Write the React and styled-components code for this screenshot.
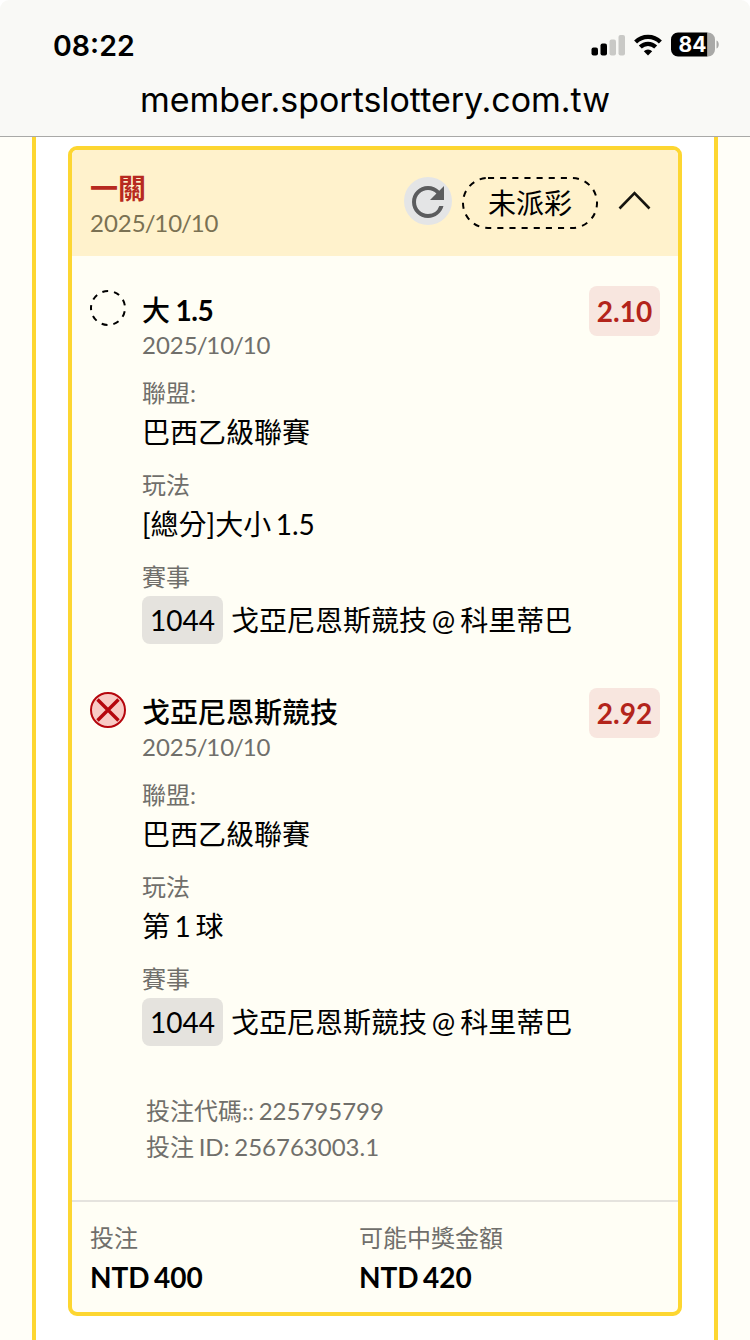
import React from 'react';
import styled, { createGlobalStyle } from 'styled-components';

const GlobalStyle = createGlobalStyle`
  * {
    box-sizing: border-box;
  }
  body {
    margin: 0;
    background: #ffffff;
    color: #000000;
    font-family: Lato, "Noto Sans CJK TC", sans-serif;
  }
`;

const Screen = styled.div`
  width: 750px;
  height: 1340px;
  overflow: hidden;
  display: flex;
  flex-direction: column;
`;

const BrowserBar = styled.header`
  height: 137px;
  flex: none;
  background: #f9f9f6;
  border-bottom: 1px solid #a9a9a7;
  border-radius: 9px 9px 0 0;
  font-family: Inter, sans-serif;
`;

const StatusBar = styled.div`
  display: flex;
  align-items: center;
  justify-content: space-between;
  height: 72px;
  padding: 18px 30px 0 53px;
`;

const Clock = styled.span`
  padding-top: 1px;
  font-size: 28.5px;
  font-weight: 600;
  line-height: 36px;
`;

const StatusIcons = styled.div`
  display: flex;
  align-items: center;
  gap: 9px;
  padding-bottom: 1px;
`;

const Address = styled.div`
  height: 56px;
  line-height: 56px;
  font-size: 34px;
  letter-spacing: -0.03px;
  text-align: center;
`;

const Page = styled.main`
  flex: 1;
  display: flex;
  padding: 0 32px;
  background: #fffef8;
`;

const Panel = styled.div`
  flex: 1;
  padding: 9px 32px 0;
  background: #ffffff;
  border: solid #fdd631;
  border-width: 0 4px;
`;

const Card = styled.section`
  height: 1170px;
  border: 4px solid #fdd631;
  border-radius: 9px;
  background: #fffef5;
  overflow: hidden;
`;

const CardHeader = styled.div`
  display: flex;
  justify-content: space-between;
  height: 106px;
  padding: 20px 26px 0 18px;
  background: #fff2cc;
`;

const CardTitle = styled.div`
  font-size: 28px;
  font-weight: 700;
  line-height: 36px;
  color: #b72a20;
`;

const DateText = styled.div`
  font-size: 24px;
  line-height: 34px;
  color: ${({ $warm }) => ($warm ? '#7a7153' : '#706f6b')};
`;

const Slash = styled.span`
  margin: 0 -1.3px 0 -1px;
`;

const HeaderActions = styled.div`
  display: flex;
  align-items: flex-start;
  padding-top: 7px;
`;

const RefreshButton = styled.div`
  width: 48px;
  height: 48px;
  border-radius: 50%;
  background: #e4e5e6;
  margin-right: 10px;

  svg {
    display: block;
  }
`;

const StatusPill = styled.div`
  position: relative;
  width: 136px;
  height: 52px;
  margin-right: 20px;
  font-size: 28px;
  line-height: 52px;
  text-align: center;

  svg {
    position: absolute;
    left: 0;
    top: 0;
  }
`;

const Chevron = styled.svg`
  display: block;
  margin-top: 12px;
`;

const Bet = styled.article`
  display: grid;
  grid-template-columns: 52px 1fr auto;
  align-items: start;
  padding: ${({ $first }) => ($first ? '36px' : '50px')} 18px 0;
`;

const BetIcon = styled.svg`
  display: block;
  margin-top: -2px;
`;

const BetName = styled.div`
  font-size: 28px;
  font-weight: 500;
  line-height: 36px;
  word-spacing: -1.5px;

  b {
    font-weight: 700;
    letter-spacing: -0.5px;
  }
`;

const Odds = styled.div`
  width: 71px;
  height: 50px;
  margin-top: -6px;
  border-radius: 8px;
  background: #f8e6df;
  color: #b3241b;
  font-size: 28px;
  font-weight: 700;
  line-height: 51px;
  text-align: center;
`;

const Field = styled.div`
  margin-top: ${({ $first }) => ($first ? '13px' : '14px')};
`;

const Label = styled.div`
  font-size: 24px;
  line-height: 36px;
  color: #706f6b;
`;

const Value = styled.div`
  font-size: 28px;
  line-height: 42px;
  word-spacing: -2.6px;
`;

const Match = styled.div`
  display: flex;
  align-items: center;
  gap: 8px;
  height: 48px;
  margin-top: 1px;
  font-size: 28px;
  line-height: 48px;
  white-space: nowrap;
  word-spacing: -2.3px;
`;

const MatchNo = styled.span`
  width: 81px;
  border-radius: 8px;
  background: #e5e3de;
  text-align: center;
`;

const Codes = styled.div`
  height: 154px;
  padding: 47px 0 0 74px;
  font-size: 24px;
  line-height: 36px;
  word-spacing: -1.5px;
  color: #706f6b;
`;

const Totals = styled.footer`
  display: grid;
  grid-template-columns: 269px 1fr;
  padding: 18px 18px 0;
  border-top: 2px solid #e5e3de;
`;

const Amount = styled.div`
  font-size: 28px;
  font-weight: 700;
  line-height: 43px;
  word-spacing: -2.4px;
`;

const bets = [
  { name: <>大 <b>1.5</b></>, odds: '2.10', type: '[總分]大小 1.5', lost: false },
  { name: '戈亞尼恩斯競技', odds: '2.92', type: '第 1 球', lost: true },
];

const SignalIcon = () => (
  <svg width="34" height="22" viewBox="0 0 34 22">
    <rect x="0.500" y="13.500" width="6.500" height="8" rx="2" fill="#000" />
    <rect x="9.500" y="9.500" width="6.500" height="12" rx="2" fill="#000" />
    <rect x="18.500" y="5.500" width="6.500" height="16" rx="2" fill="#c9c9c6" />
    <rect x="27.500" y="1" width="6.500" height="20.500" rx="2" fill="#c9c9c6" />
  </svg>
);

const WifiIcon = () => (
  <svg width="28" height="22" viewBox="0 0 28 22">
    <g fill="none" stroke="#000" strokeWidth="4.200">
      <path d="M1.600 8a17.600 17.600 0 0 1 24.800 0" />
      <path d="M6.300 13a10.900 10.900 0 0 1 15.400 0" />
    </g>
    <path d="M14 21.500l-4.200-4.200a6 6 0 0 1 8.400 0z" />
  </svg>
);

const BatteryIcon = () => (
  <svg width="49" height="25" viewBox="0 0 49 25">
    <path d="M7 .5h29.500v24H7a7 7 0 0 1-7-7v-10a7 7 0 0 1 7-7z" />
    <path d="M36.500.5h.5a7 7 0 0 1 7 7v10a7 7 0 0 1-7 7h-.5z" fill="#a9a9a7" />
    <path d="M45.500 8.500c3 1 3 7 0 8z" fill="#a9a9a7" />
    <text x="21.500" y="20" fill="#fff" fontFamily="Inter, sans-serif" fontSize="21" fontWeight="700" textAnchor="middle">
      84
    </text>
  </svg>
);

const PendingIcon = () => (
  <BetIcon width="36" height="36" viewBox="0 0 36 36">
    <circle
      cx="18"
      cy="18"
      r="17"
      fill="none"
      stroke="#000"
      strokeWidth="2"
      strokeDasharray="5.900 5.968"
      strokeDashoffset="2.950"
      transform="rotate(180 18 18)"
    />
  </BetIcon>
);

const LostIcon = () => (
  <BetIcon width="36" height="36" viewBox="0 0 36 36">
    <circle cx="18" cy="18" r="17" fill="#f8cbc5" stroke="#b5060d" strokeWidth="2" />
    <path d="M7.500 7.500l21 21M28.500 7.500l-21 21" stroke="#b5060d" strokeWidth="3.400" />
  </BetIcon>
);

const BetDate = ({ warm }) => (
  <DateText $warm={warm}>
    2025<Slash>/</Slash>10<Slash>/</Slash>10
  </DateText>
);

const BetItem = ({ bet, first }) => (
  <Bet $first={first}>
    {bet.lost ? <LostIcon /> : <PendingIcon />}
    <div>
      <BetName>{bet.name}</BetName>
      <BetDate />
      <Field $first>
        <Label>聯盟:</Label>
        <Value>巴西乙級聯賽</Value>
      </Field>
      <Field>
        <Label>玩法</Label>
        <Value>{bet.type}</Value>
      </Field>
      <Field>
        <Label>賽事</Label>
        <Match>
          <MatchNo>1044</MatchNo>
          <span>戈亞尼恩斯競技 @ 科里蒂巴</span>
        </Match>
      </Field>
    </div>
    <Odds>{bet.odds}</Odds>
  </Bet>
);

const App = () => (
  <Screen lang="zh-TW">
    <GlobalStyle />
    <BrowserBar>
      <StatusBar>
        <Clock>08:22</Clock>
        <StatusIcons>
          <SignalIcon />
          <WifiIcon />
          <BatteryIcon />
        </StatusIcons>
      </StatusBar>
      <Address>member.sportslottery.com.tw</Address>
    </BrowserBar>
    <Page>
      <Panel>
        <Card>
          <CardHeader>
            <div>
              <CardTitle>一關</CardTitle>
              <BetDate warm />
            </div>
            <HeaderActions>
              <RefreshButton>
                <svg width="48" height="49" viewBox="0 -0.500 24 24.500" fill="#5b5c5e">
                  <path d="M17.650 6.350A7.958 7.958 0 0 0 12 4c-4.420 0-7.990 3.580-7.990 8s3.570 8 7.990 8c3.730 0 6.840-2.550 7.730-6h-2.080A5.990 5.990 0 0 1 12 18c-3.310 0-6-2.690-6-6s2.690-6 6-6c1.660 0 3.140.69 4.220 1.780L13 11h7V4l-2.350 2.350z" />
                </svg>
              </RefreshButton>
              <StatusPill>
                <svg width="136" height="52" viewBox="0 0 136 52">
                  <rect x="1" y="1" width="134" height="50" rx="25" fill="none" stroke="#000" strokeWidth="2" strokeDasharray="6.100 6.039" />
                </svg>
                未派彩
              </StatusPill>
              <Chevron width="34" height="22" viewBox="0 0 34 22">
                <path d="M1.500 19.500L16.500 4l15 15.500" fill="none" stroke="#161510" strokeWidth="2.600" />
              </Chevron>
            </HeaderActions>
          </CardHeader>
          {bets.map((bet, i) => (
            <BetItem key={bet.odds} bet={bet} first={i === 0} />
          ))}
          <Codes>
            <div>投注代碼:: 225795799</div>
            <div>投注 ID: 256763003.1</div>
          </Codes>
          <Totals>
            <div>
              <Label>投注</Label>
              <Amount>NTD 400</Amount>
            </div>
            <div>
              <Label>可能中獎金額</Label>
              <Amount>NTD 420</Amount>
            </div>
          </Totals>
        </Card>
      </Panel>
    </Page>
  </Screen>
);

export default App;
